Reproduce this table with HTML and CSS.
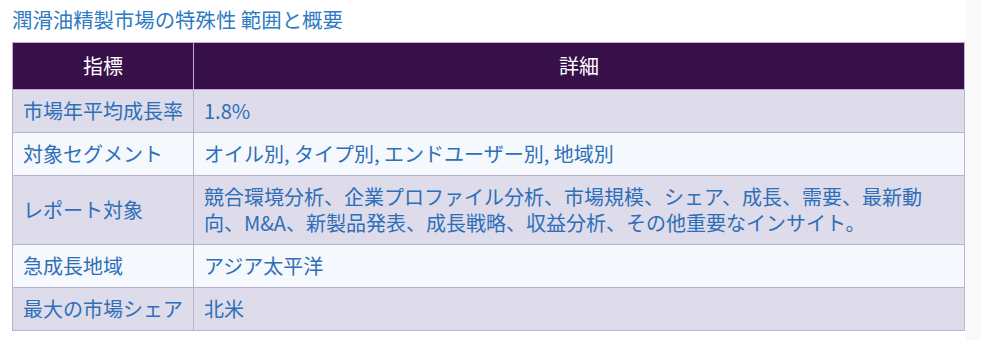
FILE: index.html
```html
<!DOCTYPE html>
<html lang="ja">
<head>
<meta charset="utf-8">
<link rel="stylesheet" href="styles.css">
</head>
<body>
<div class="page">
  <main class="main">
    <h2 class="title">潤滑油精製市場の特殊性 範囲と概要</h2>
    <table class="spec">
      <thead>
        <tr><th class="c1">指標</th><th>詳細</th></tr>
      </thead>
      <tbody>
        <tr class="odd"><td class="c1">市場年平均成長率</td><td>1.8%</td></tr>
        <tr class="even"><td class="c1">対象セグメント</td><td>オイル別, タイプ別, エンドユーザー別, 地域別</td></tr>
        <tr class="odd"><td class="c1">レポート対象</td><td>競合環境分析、企業プロファイル分析、市場規模、シェア、成長、需要、最新動向、M&amp;A、新製品発表、成長戦略、収益分析、その他重要なインサイト。</td></tr>
        <tr class="even"><td class="c1">急成長地域</td><td>アジア太平洋</td></tr>
        <tr class="odd"><td class="c1">最大の市場シェア</td><td>北米</td></tr>
      </tbody>
    </table>
  </main>
  <aside class="side"></aside>
</div>
</body>
</html>
```

FILE: styles.css
```css
html, body {
  margin: 0;
  padding: 0;
  background: #ffffff;
}
.page {
  display: flex;
  min-height: 340px;
}
.main {
  width: 966px;
  padding: 0 0 0 12px;
  box-sizing: border-box;
  font-family: "Noto Sans CJK JP", "Noto Sans", sans-serif;
}
.side {
  flex: 1;
  background: #f9f9f9;
}
.title {
  margin: 0;
  padding-top: 6px;
  height: 42px;
  box-sizing: border-box;
  font-size: 20.4px;
  line-height: 26px;
  font-weight: 400;
  color: #2e7bc4;
}
.spec {
  width: 953px;
  border-collapse: collapse;
  font-size: 20px;
  line-height: 26px;
  color: #2d6fb8;
}
.spec th, .spec td {
  border: 1px solid #b9b2cc;
  text-align: left;
  vertical-align: middle;
  padding: 8px 24px 8px 10px;
  font-weight: 400;
}
.spec th {
  background: #37104a;
  color: #ffffff;
  text-align: center;
  padding: 10px;
  border-color: #c3aad8;
}
.spec .c1 {
  width: 160px;
  padding-right: 10px;
  white-space: nowrap;
}
.spec th.c1 {
  text-align: center;
}
.odd td {
  background: #dedbea;
}
.even td {
  background: #f5f8fc;
}
```
